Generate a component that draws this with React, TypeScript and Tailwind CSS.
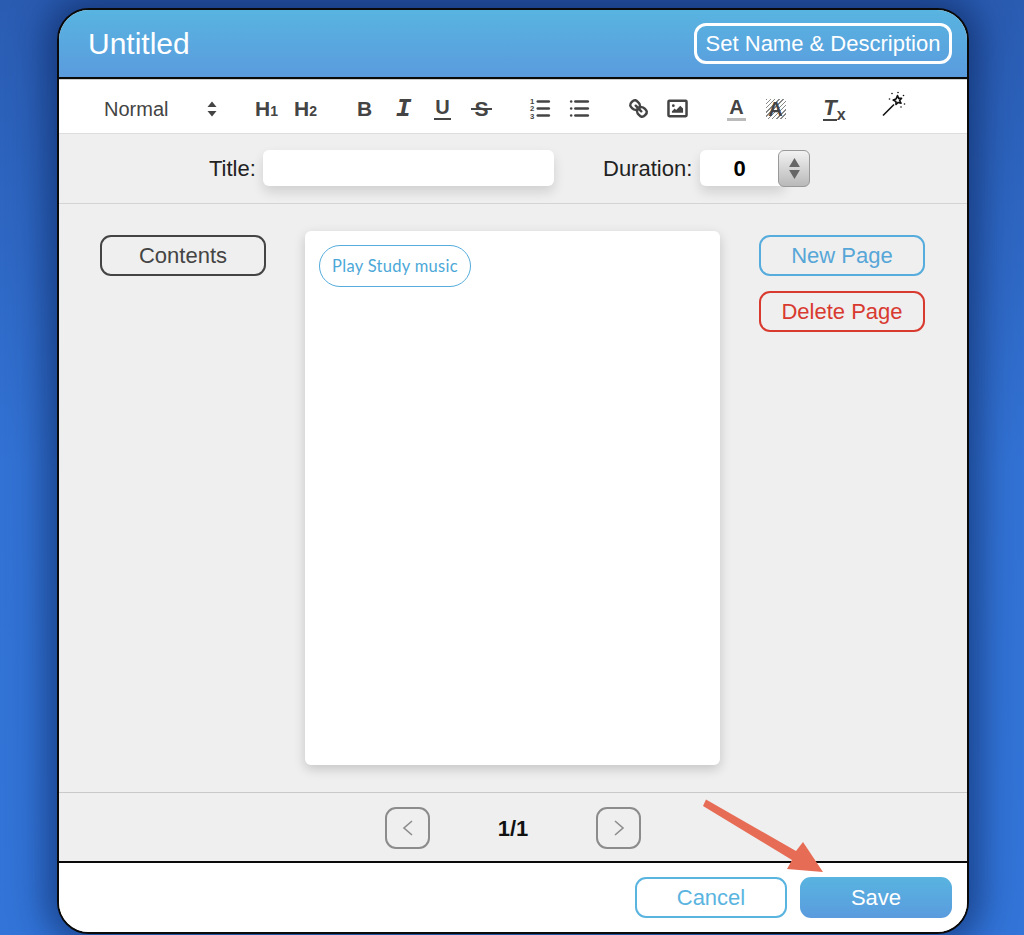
import React from 'react'

const sans = 'font-["Liberation_Sans",Arial,sans-serif]'

function ToolBtn({ children }: { children: React.ReactNode }) {
  return <div className="w-[39px] h-[39px] flex items-center justify-center text-[#444]">{children}</div>
}

function QIcon({ children }: { children: React.ReactNode }) {
  return (
    <svg viewBox="0 0 18 18" className="w-[25px] h-[25px]" fill="none" stroke="#444" strokeWidth="1.8" strokeLinecap="round" strokeLinejoin="round">
      {children}
    </svg>
  )
}

function Toolbar() {
  return (
    <div className="h-[55px] bg-white border-t border-b border-t-[#ccc] border-b-[#ddd] flex items-center pl-[45px] pt-[4px] text-[#444]">
      <div className="w-[143px] flex items-center">
        <span className="text-[20px] w-[103px]">Normal</span>
        <svg viewBox="0 0 10 16" className="w-[10px] h-[16px]" fill="#444">
          <path d="M5 0.5 9.5 6H0.5Z" />
          <path d="M5 15.5 9.5 10H0.5Z" />
        </svg>
      </div>
      <div className="flex mr-[20px]">
        <ToolBtn><span className="font-bold text-[21px] leading-none">H<span className="text-[14px]">1</span></span></ToolBtn>
        <ToolBtn><span className="font-bold text-[21px] leading-none">H<span className="text-[14px]">2</span></span></ToolBtn>
      </div>
      <div className="flex mr-[20px]">
        <ToolBtn><span className="font-bold text-[21px] leading-none">B</span></ToolBtn>
        <ToolBtn><span className='font-["Liberation_Mono",monospace] font-bold italic text-[26px] leading-none'>I</span></ToolBtn>
        <ToolBtn>
          <span className="font-bold text-[20px] leading-none border-b-2 border-[#444] pb-[1px] px-[1px]">U</span>
        </ToolBtn>
        <ToolBtn>
          <span className="relative font-bold text-[21px] leading-none">
            S
            <span className="absolute left-[-3px] right-[-3px] top-[10px] h-[2px] bg-[#444]" />
          </span>
        </ToolBtn>
      </div>
      <div className="flex mr-[20px]">
        <ToolBtn>
          <QIcon>
            <line x1="7" x2="15" y1="4" y2="4" />
            <line x1="7" x2="15" y1="9" y2="9" />
            <line x1="7" x2="15" y1="14" y2="14" />
            <text x="1.4" y="5.8" fontSize="5.6" fontWeight="700" fill="#444" stroke="none">1</text>
            <text x="1.4" y="11" fontSize="5.6" fontWeight="700" fill="#444" stroke="none">2</text>
            <text x="1.4" y="16.2" fontSize="5.6" fontWeight="700" fill="#444" stroke="none">3</text>
          </QIcon>
        </ToolBtn>
        <ToolBtn>
          <QIcon>
            <line x1="6" x2="15" y1="4" y2="4" />
            <line x1="6" x2="15" y1="9" y2="9" />
            <line x1="6" x2="15" y1="14" y2="14" />
            <line x1="3" x2="3" y1="4" y2="4" />
            <line x1="3" x2="3" y1="9" y2="9" />
            <line x1="3" x2="3" y1="14" y2="14" />
          </QIcon>
        </ToolBtn>
      </div>
      <div className="flex mr-[20px]">
        <ToolBtn>
          <QIcon>
            <line x1="7" x2="11" y1="7" y2="11" />
            <path d="M8.9,4.577a3.476,3.476,0,0,1,.36,4.679A3.476,3.476,0,0,1,4.577,8.9C3.185,7.5,2.035,6.4,4.217,4.217S7.5,3.185,8.9,4.577Z" />
            <path d="M13.423,9.1a3.476,3.476,0,0,0-4.679-.36,3.476,3.476,0,0,0,.36,4.679c1.392,1.392,2.5,2.542,4.679.36S14.815,10.5,13.423,9.1Z" />
          </QIcon>
        </ToolBtn>
        <ToolBtn>
          <QIcon>
            <rect x="2.5" y="3.5" width="13" height="11" rx=".6" ry=".6" />
            <circle cx="6" cy="7" r="1" fill="#444" stroke="none" />
            <polygon points="5 12 5 11 7 9 8 10 11 7 13 9 13 12 5 12" fill="#444" stroke="none" />
          </QIcon>
        </ToolBtn>
      </div>
      <div className="flex mr-[20px]">
        <ToolBtn>
          <span className="font-bold text-[20px] leading-none border-b-[3px] border-[#bbb] px-[2px] pb-[1px]">A</span>
        </ToolBtn>
        <ToolBtn>
          <span className="flex items-center justify-center w-[20px] h-[20px] font-bold text-[20px] leading-none bg-[repeating-linear-gradient(135deg,#888_0px,#888_1px,#fff_1px,#fff_3px)]">A</span>
        </ToolBtn>
      </div>
      <div className="flex">
        <ToolBtn>
          <span className="flex items-end">
            <span className="font-bold italic text-[22px] leading-none border-b-2 border-[#444]">T</span>
            <span className="font-bold text-[16px] leading-none -mb-[2px]">x</span>
          </span>
        </ToolBtn>
        <div className="w-[39px] h-[39px] flex items-center justify-center -mt-[5px] ml-[20px]">
          <svg viewBox="0 0 26 26" className="w-[26px] h-[26px]" fill="none" stroke="#111">
            <line x1="2" y1="24.5" x2="13" y2="13.5" strokeWidth="1.6" />
            <path d="M16.5 4.5 17.6 7.4 20.6 7.2 18.6 9.5 20 12.2 17.1 11.4 15 13.5 14.9 10.5 12.2 9.1 15 8Z" strokeWidth="1.6" strokeLinejoin="round" />
            <circle cx="11" cy="2.5" r=".8" fill="#111" stroke="none" />
            <circle cx="17" cy="1.5" r=".8" fill="#111" stroke="none" />
            <circle cx="22.5" cy="4.5" r=".8" fill="#111" stroke="none" />
            <circle cx="23.5" cy="13" r=".8" fill="#111" stroke="none" />
            <circle cx="20" cy="16" r=".8" fill="#111" stroke="none" />
            <circle cx="8.5" cy="8" r=".8" fill="#111" stroke="none" />
          </svg>
        </div>
      </div>
    </div>
  )
}

function TitleRow() {
  return (
    <div className="h-[70px] border-b border-[#d4d4d4] flex items-center pl-[150px] pb-[1px] text-[#222] text-[22px]">
      <span className="w-[54px]">Title:</span>
      <div className="w-[291px] h-[36px] bg-white rounded-md shadow-[0_6px_12px_rgba(0,0,0,0.13)]" />
      <span className="ml-[49px] w-[89px] whitespace-nowrap">Duration:</span>
      <div className="ml-[8px] w-[85px] h-[36px] bg-white rounded-md shadow-[0_6px_12px_rgba(0,0,0,0.13)] flex items-center justify-center pr-[6px] font-bold text-black">
        0
      </div>
      <div className="-ml-[7px] w-[32px] h-[37px] rounded-md border border-[#999] bg-linear-to-b from-[#f2f2f2] to-[#b9b9b9] flex flex-col items-center justify-center gap-[3px] relative">
        <svg viewBox="0 0 12 10" className="w-[11px] h-[9px]" fill="#666"><path d="M6 0 12 10H0Z" /></svg>
        <svg viewBox="0 0 12 10" className="w-[11px] h-[9px]" fill="#666"><path d="M6 10 12 0H0Z" /></svg>
      </div>
    </div>
  )
}

function OutlineBtn({ label, cls }: { label: string; cls: string }) {
  return (
    <div className={`w-[166px] h-[41px] rounded-[11px] border-[2.5px] flex items-center justify-center text-[22px] ${cls}`}>
      {label}
    </div>
  )
}

function PagerBtn({ points }: { points: string }) {
  return (
    <div className="w-[45px] h-[42px] rounded-[11px] border-[2.5px] border-[#8c8c8c] flex items-center justify-center">
      <svg viewBox="0 0 12 16" className="w-[12px] h-[16px]" fill="none" stroke="#8c8c8c" strokeWidth="1.6">
        <polyline points={points} />
      </svg>
    </div>
  )
}

export default function App() {
  return (
    <div className={`relative h-[935px] overflow-hidden bg-linear-to-b from-[#2a5cb2] via-[#3272d4] to-[#3274d8] pt-[8px] pl-[57px] ${sans}`}>
      <div className="w-[912px] h-[926px] rounded-[32px] border-2 border-[#0a0a0a] overflow-hidden bg-[#efefef] shadow-[0_0_34px_12px_rgba(8,30,80,0.55)] flex flex-col">
        <div className="h-[67px] bg-linear-to-b from-[#58b4e0] to-[#5a9bde] flex items-center justify-between pl-[29px] pr-[15px] text-white">
          <span className="text-[30px]">Untitled</span>
          <div className="w-[258px] h-[41px] rounded-[12px] border-[3px] border-white flex items-center justify-center text-[22px] whitespace-nowrap">
            Set Name &amp; Description
          </div>
        </div>
        <div className="h-[2px] bg-[#0a0a0a]" />
        <Toolbar />
        <TitleRow />
        <div className="h-[589px] border-b border-[#c9c9c9] flex pl-[41px] pt-[27px] gap-[39px]">
          <OutlineBtn label="Contents" cls="mt-[4px] border-[#444] text-[#444]" />
          <div className="w-[415px] h-[534px] bg-white rounded-md shadow-[0_4px_12px_rgba(0,0,0,0.18)] p-[14px]">
            <div className='w-[152px] h-[42px] rounded-full border-[1.5px] border-[#56acdc] flex items-center justify-center text-[#4ca8d8] text-[16.5px] tracking-[0.3px] font-["Lato",sans-serif]'>
              Play Study music
            </div>
          </div>
          <div className="mt-[4px] flex flex-col gap-[15px]">
            <OutlineBtn label="New Page" cls="border-[#56acdc] text-[#56a6d8]" />
            <OutlineBtn label="Delete Page" cls="border-[#d93a2f] text-[#d93a2f]" />
          </div>
        </div>
        <div className="h-[68px] flex items-center justify-center pt-[2px]">
          <PagerBtn points="10,1 2,8 10,15" />
          <span className="w-[166px] text-center font-bold text-[22px] text-[#111]">1/1</span>
          <PagerBtn points="2,1 10,8 2,15" />
        </div>
        <div className="h-[2px] bg-[#0a0a0a]" />
        <div className="flex-1 bg-white flex items-center justify-end gap-[13px] pr-[15px]">
          <div className="w-[152px] h-[41px] rounded-[11px] border-[2.5px] border-[#5ab4e0] text-[#5ab4e0] flex items-center justify-center text-[22px]">Cancel</div>
          <div className="w-[152px] h-[41px] rounded-[11px] bg-linear-to-b from-[#58b4e0] to-[#5a9bde] text-white flex items-center justify-center text-[22px]">Save</div>
        </div>
      </div>
      <svg className="absolute left-0 top-0 pointer-events-none" width="1024" height="935" viewBox="0 0 1024 935" fill="#e76c55">
        <path d="M706 799.5 L796 851 L803 842 L823 872 L787 869 L792 860 L703 806Z" />
      </svg>
    </div>
  )
}
